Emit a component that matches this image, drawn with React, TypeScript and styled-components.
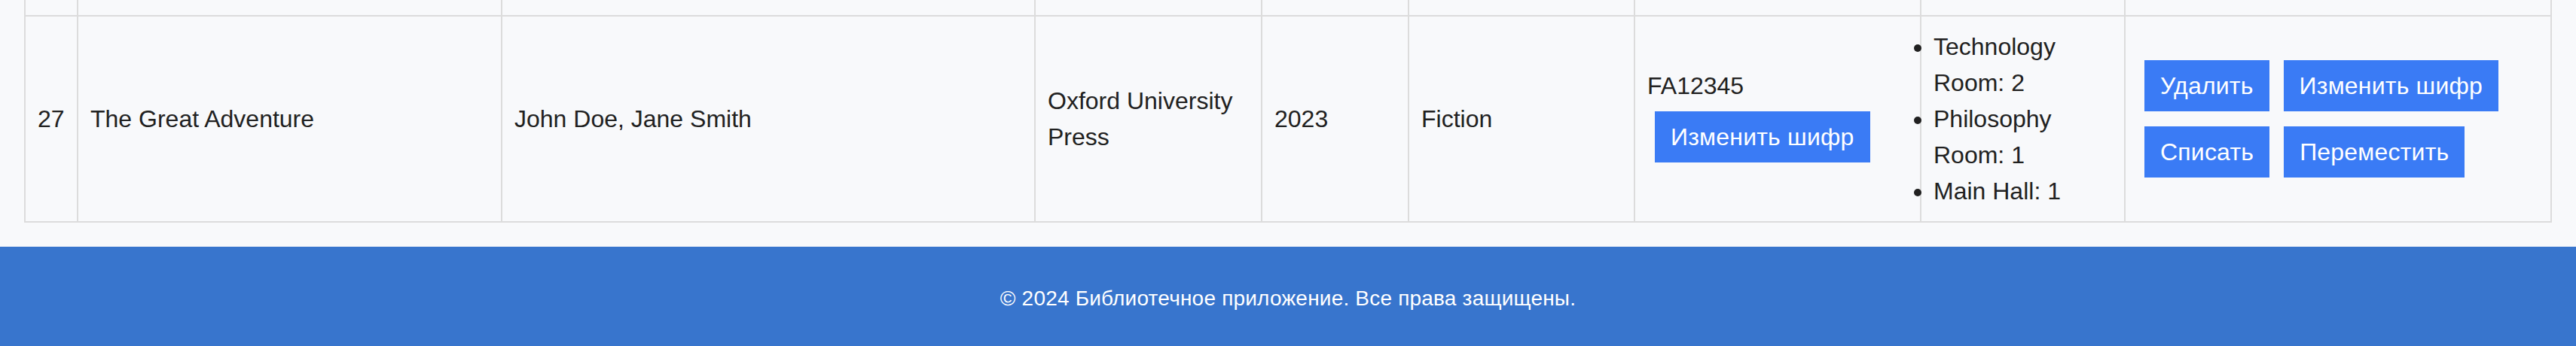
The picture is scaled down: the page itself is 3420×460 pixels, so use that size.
import React from "react";
import styled, { createGlobalStyle } from "styled-components";

const GlobalStyle = createGlobalStyle`
  html, body {
    margin: 0;
    padding: 0;
    background: #f8f9fb;
  }
  body {
    font-family: "Liberation Sans", Arial, Helvetica, sans-serif;
    font-size: 32px;
    line-height: 1.5;
    color: #212121;
  }
`;

const Page = styled.div`
  display: flex;
  flex-direction: column;
  min-height: 100vh;
`;

const Main = styled.main`
  padding: 0 32px 32px 32px;
`;

const Table = styled.table`
  width: 3355px;
  border-collapse: collapse;
  table-layout: fixed;
  background: #f8f9fb;
`;

const Cell = styled.td<{ $top?: boolean }>`
  border: 2px solid #dcdcdc;
  border-top: ${(p) => (p.$top ? "none" : "2px solid #dcdcdc")};
  padding: ${(p) => (p.$top ? "0" : "16px")};
  height: ${(p) => (p.$top ? "20px" : "auto")};
  vertical-align: middle;
  text-align: left;
`;

const CodeValue = styled.div``;

const Button = styled.button`
  display: inline-block;
  margin: 10px;
  padding: 10px 21px;
  border: none;
  border-radius: 0;
  background: #3a7bf5;
  color: #ffffff;
  font-family: inherit;
  font-size: 32px;
  line-height: 48px;
  letter-spacing: 0.2px;
  cursor: pointer;
`;

const ActionButton = styled(Button)`
  margin: 10px 10px 10px 9px;
`;

const LocationList = styled.ul`
  margin: 0;
  padding: 0;
  list-style: disc outside;
`;

const LocationItem = styled.li``;

const Footer = styled.footer`
  background: #3875cd;
  color: #ffffff;
  text-align: center;
  padding: 48px 16px;
  font-size: 28px;
  line-height: 42px;
  letter-spacing: 0.2px;
`;

const widths = [70, 563, 708, 301, 195, 300, 380, 271, 566];

const book = {
  id: 27,
  title: "The Great Adventure",
  authors: "John Doe, Jane Smith",
  publisher: "Oxford University Press",
  year: 2023,
  genre: "Fiction",
  code: "FA12345",
  locations: ["Technology Room: 2", "Philosophy Room: 1", "Main Hall: 1"],
};

export default function App() {
  return (
    <Page>
      <GlobalStyle />
      <Main>
        <Table>
          <colgroup>
            {widths.map((w, i) => (
              <col key={i} style={{ width: w }} />
            ))}
          </colgroup>
          <tbody>
            <tr>
              {widths.map((_, i) => (
                <Cell key={i} $top />
              ))}
            </tr>
            <tr>
              <Cell>{book.id}</Cell>
              <Cell>{book.title}</Cell>
              <Cell>{book.authors}</Cell>
              <Cell>{book.publisher}</Cell>
              <Cell>{book.year}</Cell>
              <Cell>{book.genre}</Cell>
              <Cell>
                <CodeValue>{book.code}</CodeValue>
                <Button>Изменить шифр</Button>
              </Cell>
              <Cell>
                <LocationList>
                  {book.locations.map((l) => (
                    <LocationItem key={l}>{l}</LocationItem>
                  ))}
                </LocationList>
              </Cell>
              <Cell>
                <ActionButton>Удалить</ActionButton>
                <ActionButton>Изменить шифр</ActionButton>
                <ActionButton>Списать</ActionButton>
                <ActionButton>Переместить</ActionButton>
              </Cell>
            </tr>
          </tbody>
        </Table>
      </Main>
      <Footer>© 2024 Библиотечное приложение. Все права защищены.</Footer>
    </Page>
  );
}
